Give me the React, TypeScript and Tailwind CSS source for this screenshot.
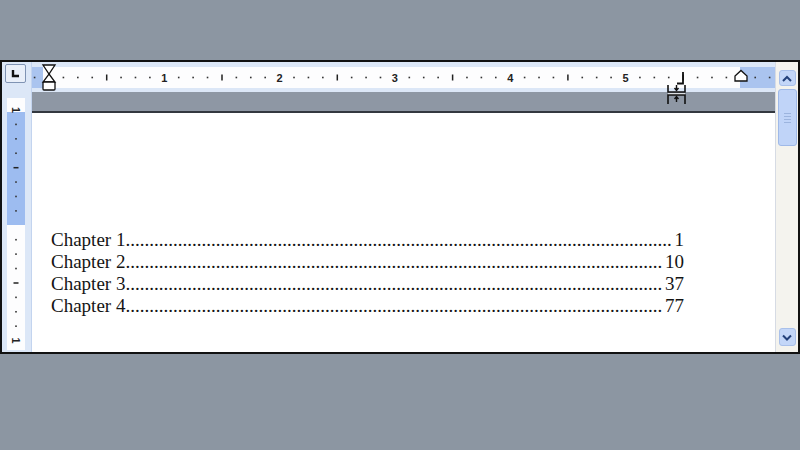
import React from "react";

const INCH = 115.3;
const STEP = INCH / 8;

const entries = [
  { title: "Chapter 1", page: "1", dots: 115 },
  { title: "Chapter 2", page: "10", dots: 113 },
  { title: "Chapter 3", page: "37", dots: 113 },
  { title: "Chapter 4", page: "77", dots: 113 },
];

function HorizontalRuler() {
  const zero = 17;
  const marks = [];
  for (let i = -1; i <= 50; i++) {
    if (i === 0) continue;
    const x = zero + i * STEP;
    if (i % 8 === 0) {
      if (i === 48) continue;
      marks.push(
        <text
          key={i}
          x={x}
          y={20}
          textAnchor="middle"
          fontSize="11"
          fontWeight="bold"
          fontFamily="'Liberation Sans', Arial, sans-serif"
          fill="#222"
        >
          {i / 8}
        </text>
      );
    } else if (i % 8 === 4) {
      marks.push(<rect key={i} x={x - 0.7} y={12.5} width={1.5} height={6} fill="#222" />);
    } else {
      marks.push(<rect key={i} x={x - 0.8} y={14.7} width={1.6} height={1.6} fill="#333" />);
    }
  }
  return (
    <svg width="743" height="30" className="block">
      <rect x="0" y="0" width="743" height="30" fill="#dce7f7" />
      <rect x="0" y="5" width="743" height="21" fill="#fdfdfe" />
      <rect x="0" y="5" width="11" height="21" fill="#aac4ef" />
      <rect x="708" y="5" width="35" height="21" fill="#aac4ef" />
      {marks}
      {/* first line / hanging indent hourglass */}
      <path d="M11 3 L23 3 L17 12 Z" fill="#fff" stroke="#111" strokeWidth="1.3" />
      <path d="M17 12 L23 20 L11 20 Z" fill="#fff" stroke="#111" strokeWidth="1.3" />
      <rect x="11" y="20" width="12" height="8" rx="1" fill="#fff" stroke="#111" strokeWidth="1.3" />
      {/* right indent */}
      <path d="M703 19 L703 14 L709 8.5 L715 14 L715 19 Z" fill="#fff" stroke="#111" strokeWidth="1.3" />
      {/* right tab stop */}
      <path d="M651 10 L651 21.5 L645 21.5" fill="none" stroke="#111" strokeWidth="1.8" />
    </svg>
  );
}

function VerticalRuler() {
  const marks = [];
  const top = 12;
  for (let i = 0; i <= 16; i++) {
    const y = top + i * STEP;
    if (i === 8) continue;
    if (i === 0 || i === 16) {
      marks.push(
        <text
          key={i}
          x={0}
          y={0}
          textAnchor="middle"
          fontSize="11"
          fontWeight="bold"
          fontFamily="'Liberation Sans', Arial, sans-serif"
          fill="#222"
          transform={`translate(5, ${y}) rotate(90)`}
        >
          1
        </text>
      );
    } else if (i % 8 === 4) {
      marks.push(<rect key={i} x={6.5} y={y - 0.7} width={5} height={1.5} fill="#222" />);
    } else {
      marks.push(<rect key={i} x={8.2} y={y - 0.8} width={1.6} height={1.6} fill="#333" />);
    }
  }
  return (
    <svg width="18" height="252" className="block">
      <rect x="0" y="0" width="18" height="252" fill="#fdfdfe" />
      <rect x="0" y="14" width="18" height="113" fill="#9dbcf0" />
      {marks}
    </svg>
  );
}

function Chevron({ up }: { up?: boolean }) {
  return (
    <svg width="10" height="7" viewBox="0 0 10 7">
      <path
        d={up ? "M1 6 L5 2 L9 6" : "M1 1.5 L5 5.5 L9 1.5"}
        fill="none"
        stroke="#23407a"
        strokeWidth="2"
      />
    </svg>
  );
}

function ResizeCursor() {
  return (
    <svg width="22" height="24" viewBox="0 0 22 24">
      <path d="M2 1 L2 8 L19 8 L19 1" fill="none" stroke="#111" strokeWidth="1.6" />
      <path d="M10.5 1 L10.5 6 M8.5 4 L10.5 6.5 L12.5 4" fill="none" stroke="#111" strokeWidth="1.4" />
      <rect x="2" y="9.3" width="17" height="1.6" fill="#fff" />
      <path d="M2 20 L2 11 L19 11 L19 20" fill="none" stroke="#111" strokeWidth="1.6" />
      <path d="M10.5 18 L10.5 13 M8.5 15 L10.5 12.5 L12.5 15" fill="none" stroke="#111" strokeWidth="1.4" />
    </svg>
  );
}

export default function App() {
  return (
    <div className="w-[800px] h-[450px] bg-[#8c96a2] flex flex-col overflow-hidden">
      <div className="h-[60px] shrink-0" />

      <div className="relative h-[294px] shrink-0 border-y-2 border-x-2 border-[#111] bg-[#dce7f7] flex">
        {/* left column */}
        <div className="w-[30px] shrink-0 flex flex-col items-start border-r border-[#c3d4ef]">
          <div className="mt-[2px] ml-[3px] w-[21px] h-[19px] border border-[#7f93b3] bg-[#e9eff9] rounded-[2px] flex items-center justify-center">
            <svg width="9" height="9" viewBox="0 0 9 9">
              <path d="M2 1 L2 7 L8 7" fill="none" stroke="#111" strokeWidth="2.4" />
            </svg>
          </div>
          <div className="mt-[15px] ml-[5px]">
            <VerticalRuler />
          </div>
        </div>

        {/* centre */}
        <div className="w-[743px] shrink-0 flex flex-col">
          <HorizontalRuler />
          <div className="h-[19px] bg-[#8e97a4]" />
          <div className="h-[2px] bg-[#33383f]" />
          <div className="flex-1 bg-white pl-[19px] pt-[116px]">
            <div className="w-[633px] font-['Liberation_Serif','Times_New_Roman',serif] text-[19px] leading-[22px] text-[#141414]">
              {entries.map((e) => (
                <div key={e.title} className="flex">
                  <span className="whitespace-nowrap">{e.title}</span>
                  <span className="flex-1 whitespace-nowrap text-left">{".".repeat(e.dots)}</span>
                  <span className="whitespace-nowrap">{e.page}</span>
                </div>
              ))}
            </div>
          </div>
        </div>

        {/* scrollbar */}
        <div className="flex-1 bg-[#f4f3ee] flex flex-col items-center pt-[8px] pb-[4px] border-l border-[#d6dbe4]">
          <div className="w-[17px] h-[16px] rounded-[3px] bg-[#c3d6f8] border border-[#a9c0ea] flex items-center justify-center">
            <Chevron up />
          </div>
          <div className="mt-[3px] w-[19px] h-[57px] rounded-[3px] bg-[#c0d4f8] border border-[#9fb9e8] flex flex-col items-center justify-center gap-[2px]">
            <div className="w-[7px] h-[1px] bg-[#9cb4de]" />
            <div className="w-[7px] h-[1px] bg-[#9cb4de]" />
            <div className="w-[7px] h-[1px] bg-[#9cb4de]" />
            <div className="w-[7px] h-[1px] bg-[#9cb4de]" />
          </div>
          <div className="flex-1" />
          <div className="w-[17px] h-[18px] rounded-[3px] bg-[#c3d6f8] border border-[#a9c0ea] flex items-center justify-center mb-[2px]">
            <Chevron />
          </div>
        </div>

        {/* mouse cursor over the margin boundary */}
        <div className="absolute left-[664px] top-[22px]">
          <ResizeCursor />
        </div>
      </div>

      <div className="flex-1" />
    </div>
  );
}
